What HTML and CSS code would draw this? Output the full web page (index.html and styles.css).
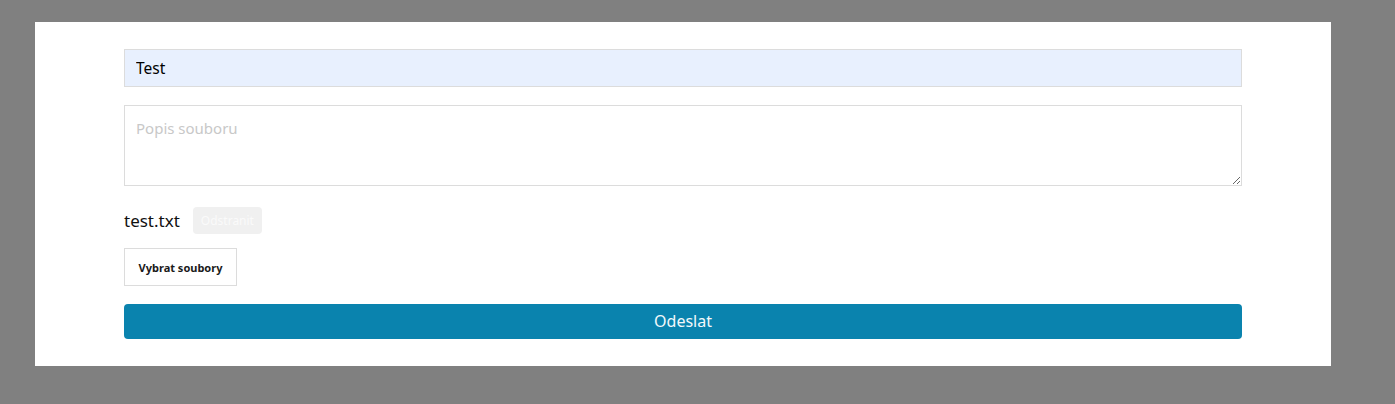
FILE: index.html
```html
<!DOCTYPE html>
<html lang="cs">
<head>
    <meta charset="UTF-8">
    <meta name="viewport" content="width=device-width, initial-scale=1.0">
    <title>Nahrát soubor</title>
    <link rel="stylesheet" href="styles.css">
</head>
<body>
    <div class="overlay">
        <form class="modal" onsubmit="return false">
            <input class="field field-filled" type="text" value="Test">
            <textarea class="field field-area" placeholder="Popis souboru"></textarea>
            <div class="file-row">
                <span class="file-name">test.txt</span>
                <button type="button" class="btn-remove">Odstranit</button>
            </div>
            <div>
                <button type="button" class="btn-pick">Vybrat soubory</button>
            </div>
            <button type="submit" class="btn-submit">Odeslat</button>
        </form>
    </div>
</body>
</html>
```

FILE: styles.css
```css
:root {
    --overlay-gray: #808080;
    --border-color: #dcdcdc;
    --autofill-blue: #e8f0fe;
    --primary: #0a83ae;
    --text-dark: #111;
}

body {
    margin: 0;
    background-color: var(--overlay-gray);
    font-family: 'Noto Sans', 'Open Sans', sans-serif;
    color: var(--text-dark);
}

.overlay {
    height: 404px;
    padding: 22px 64px 0 35px;
    box-sizing: border-box;
}

.modal {
    width: 1296px;
    box-sizing: border-box;
    background-color: #fff;
    padding: 27px 89px;
    display: flex;
    flex-direction: column;
}

.field {
    display: block;
    width: 100%;
    box-sizing: border-box;
    border: 1px solid var(--border-color);
    font-family: inherit;
    font-size: 15px;
    padding: 0 11px;
    margin: 0;
    outline: none;
}

.field-filled {
    height: 38px;
    background-color: var(--autofill-blue);
    color: #000;
    font-size: 15.5px;
    padding-bottom: 1px;
}

.field-area {
    height: 81px;
    margin-top: 18px;
    padding-top: 12px;
    resize: vertical;
}

.field-area::placeholder {
    color: #c8c8c8;
}

.file-row {
    display: flex;
    align-items: center;
    gap: 13px;
    margin-top: 21px;
}

.file-name {
    font-size: 17px;
    margin-top: -1px;
}

.btn-remove {
    height: 27px;
    padding: 0 8px;
    border: none;
    border-radius: 4px;
    background-color: #f0f0f0;
    color: #fafafa;
    font-family: inherit;
    font-size: 12px;
}

.btn-pick {
    margin-top: 14px;
    width: 113px;
    height: 38px;
    background-color: #fff;
    border: 1px solid var(--border-color);
    font-family: inherit;
    font-size: 11px;
    font-weight: bold;
    color: #1a1a1a;
    padding: 0;
}

.btn-submit {
    margin-top: 18px;
    height: 35px;
    width: 100%;
    border: none;
    border-radius: 4px;
    background-color: var(--primary);
    color: #f2f8fb;
    font-family: inherit;
    font-size: 16px;
    padding-bottom: 2px;
    cursor: pointer;
}
```
